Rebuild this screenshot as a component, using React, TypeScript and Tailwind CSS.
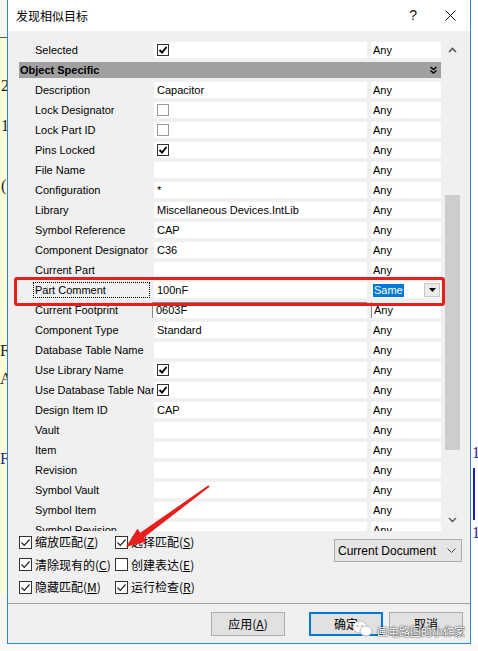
// "发现相似目标" dialog (Altium Find Similar Objects) over a schematic.

type Row = { label: string; value?: string; check?: boolean; header?: boolean };

const rows: Row[] = [
  { label: "Selected", check: true },
  { label: "Object Specific", header: true },
  { label: "Description", value: "Capacitor" },
  { label: "Lock Designator", check: false },
  { label: "Lock Part ID", check: false },
  { label: "Pins Locked", check: true },
  { label: "File Name", value: "" },
  { label: "Configuration", value: "*" },
  { label: "Library", value: "Miscellaneous Devices.IntLib" },
  { label: "Symbol Reference", value: "CAP" },
  { label: "Component Designator", value: "C36" },
  { label: "Current Part", value: "" },
  { label: "Part Comment", value: "100nF" },
  { label: "Current Footprint", value: "0603F" },
  { label: "Component Type", value: "Standard" },
  { label: "Database Table Name", value: "" },
  { label: "Use Library Name", check: true },
  { label: "Use Database Table Name", check: true },
  { label: "Design Item ID", value: "CAP" },
  { label: "Vault", value: "" },
  { label: "Item", value: "" },
  { label: "Revision", value: "" },
  { label: "Symbol Vault", value: "" },
  { label: "Symbol Item", value: "" },
  { label: "Symbol Revision", value: "" },
];

function GridCheck({ on }: { on: boolean }) {
  return (
    <span
      className={
        "flex h-[12px] w-[12px] items-center justify-center border bg-white " +
        (on ? "border-[#333]" : "border-[#9a9a9a]")
      }
    >
      {on && (
        <svg width="10" height="10" viewBox="0 0 10 10">
          <path d="M1.5 5 L4 7.5 L8.5 2" stroke="#000" strokeWidth="1.9" fill="none" />
        </svg>
      )}
    </span>
  );
}

function GridRow({ row }: { row: Row }) {
  if (row.header) {
    return (
      <div className="flex h-[20px] shrink-0 items-center">
        <div className="flex h-[16px] w-[422px] items-center justify-between bg-[#a0a0a0] pl-[1px] pr-[4px]">
          <span className="text-[11px] font-bold text-black">{row.label}</span>
          <svg width="7" height="8" viewBox="0 0 7 8">
            <path d="M0.5 1 L3.5 3.5 L6.5 1 M0.5 4.5 L3.5 7 L6.5 4.5" stroke="#000" strokeWidth="1.4" fill="none" />
          </svg>
        </div>
      </div>
    );
  }
  const focused = row.label === "Part Comment";
  const under = row.label === "Current Footprint";
  return (
    <div className="flex h-[20px] shrink-0 items-center">
      <div className="h-[16px] w-[135px] overflow-hidden whitespace-nowrap">
        {focused ? (
          <div className="ml-[14px] flex h-[16px] w-[117px] items-center border border-dotted border-black pl-[1px]">
            {row.label}
          </div>
        ) : (
          <div className="flex h-[16px] items-center pl-[16px]">{row.label}</div>
        )}
      </div>
      <div
        className={
          "flex h-[16px] w-[213px] items-center overflow-hidden whitespace-nowrap bg-white pl-[3px]" +
          (under ? " -ml-[2px] w-[215px] border-l border-t border-[#8a8a8a]" : "")
        }
      >
        {row.check !== undefined ? <GridCheck on={row.check} /> : row.value}
      </div>
      {focused ? (
        <div className="ml-[4px] flex h-[16px] w-[70px] items-center justify-between bg-white pl-[2px] pr-[1px]">
          <span className="bg-[#0078d7] px-[1px] leading-[13px] text-white">Same</span>
          <span className="flex h-[14px] w-[16px] items-center justify-center border border-[#c8c8c8] bg-[#ececec]">
            <svg width="7" height="4" viewBox="0 0 7 4">
              <path d="M0 0 H7 L3.5 4 Z" fill="#000" />
            </svg>
          </span>
        </div>
      ) : (
        <div
          className={
            "ml-[4px] flex h-[16px] w-[70px] items-center bg-white pl-[2px]" +
            (under ? " border-l border-[#8a8a8a]" : "")
          }
        >
          Any
        </div>
      )}
    </div>
  );
}

function Scrollbar() {
  return (
    <div className="flex h-full w-[18px] flex-col items-center bg-[#f0f0f0]">
      <div className="flex h-[20px] shrink-0 items-center">
        <svg width="9" height="6" viewBox="0 0 9 6">
          <path d="M1 5 L4.5 1.5 L8 5" stroke="#555" strokeWidth="1.6" fill="none" />
        </svg>
      </div>
      <div className="mt-[135px] h-[255px] w-[15px] shrink-0 bg-[#cdcdcd]" />
      <div className="flex-1" />
      <div className="flex h-[22px] shrink-0 items-center">
        <svg width="9" height="6" viewBox="0 0 9 6">
          <path d="M1 1 L4.5 4.5 L8 1" stroke="#555" strokeWidth="1.4" fill="none" />
        </svg>
      </div>
    </div>
  );
}

function BoxCheck({ on, label, key1 }: { on: boolean; label: string; key1: string }) {
  return (
    <div className="flex items-center gap-[3px]">
      <span className="flex h-[13px] w-[13px] items-center justify-center border border-[#333] bg-white">
        {on && (
          <svg width="11" height="11" viewBox="0 0 11 11">
            <path d="M1.5 5.5 L4.3 8.3 L9.5 2.5" stroke="#222" strokeWidth="1.2" fill="none" />
          </svg>
        )}
      </span>
      <span className="text-[12px] leading-none text-black">
        {label}(<span className="underline">{key1}</span>)
      </span>
    </div>
  );
}

function Button({ text, primary }: { text: React.ReactNode; primary?: boolean }) {
  return (
    <div
      className={
        "flex h-[24px] w-[74px] items-center justify-center bg-[#e1e1e1] text-[12px] text-black " +
        (primary ? "border-2 border-[#0078d7]" : "border border-[#adadad]")
      }
    >
      {text}
    </div>
  );
}

export default function App() {
  return (
    <div className="relative h-[651px] w-[478px] overflow-hidden bg-[#fafafa] font-['Liberation_Sans','Noto_Sans_CJK_SC',sans-serif] text-[11px] text-black">
      <div className="flex h-[644px]">
        {/* schematic peeking out on the left */}
        <div className="relative flex w-[7px] flex-col">
          <div className="h-[37px] bg-[#f7f7f7]" />
          <div className="h-px bg-[#555]" />
          <div className="relative flex-1 overflow-hidden bg-[#ffffd8] font-['Liberation_Serif',serif] text-[16px] leading-none text-[#222]">
            <span className="absolute left-[1px] top-[40px]">2</span>
            <span className="absolute left-[1px] top-[80px]">1</span>
            <span className="absolute left-[1px] top-[140px]">(</span>
            <span className="absolute left-[0px] top-[305px]">F</span>
            <span className="absolute left-[0px] top-[333px]">A</span>
            <span className="absolute left-[0px] top-[413px] text-[#23239a]">F</span>
          </div>
          <div className="h-[50px] bg-[#f7f7f7]" />
        </div>

        {/* dialog */}
        <div className="flex w-[464px] flex-col border-x border-b border-[#2f86d6]">
          <div className="flex h-[31px] shrink-0 items-center bg-white pl-[8px]">
            <span className="font-['Noto_Sans_CJK_SC',sans-serif] text-[12px]">发现相似目标</span>
            <span className="ml-auto mr-[28px] text-[14px] text-[#111]">?</span>
            <svg className="mr-[14px]" width="11" height="11" viewBox="0 0 11 11">
              <path d="M0.5 0.5 L10.5 10.5 M10.5 0.5 L0.5 10.5" stroke="#111" strokeWidth="1" />
            </svg>
          </div>

          <div className="flex flex-1 flex-col bg-[#f0f0f0]">
            <div className="mt-[9px] flex h-[491px] shrink-0 gap-[2px] pl-[11px]">
              <div className="flex w-[422px] flex-col overflow-hidden">
                {rows.map((r) => (
                  <GridRow key={r.label} row={r} />
                ))}
              </div>
              <Scrollbar />
            </div>

            <div className="flex h-[72px] shrink-0 pl-[11px] pr-[8px] font-['Noto_Sans_CJK_SC',sans-serif]">
              <div className="grid grid-cols-[96px_auto] grid-rows-[22px_23px_22px] items-center">
                <BoxCheck on label="缩放匹配" key1="Z" />
                <BoxCheck on label="选择匹配" key1="S" />
                <BoxCheck on label="清除现有的" key1="C" />
                <BoxCheck on={false} label="创建表达" key1="E" />
                <BoxCheck on label="隐藏匹配" key1="M" />
                <BoxCheck on label="运行检查" key1="R" />
              </div>
              <div className="ml-auto mt-[8px] flex h-[23px] w-[128px] items-center justify-between border border-[#acacac] bg-[#e5e5e5] pl-[3px] pr-[5px] font-['Liberation_Sans',sans-serif] text-[12px]">
                <span>Current Document</span>
                <svg width="9" height="5" viewBox="0 0 9 5">
                  <path d="M0.5 0.5 L4.5 4.5 L8.5 0.5" stroke="#444" strokeWidth="1" fill="none" />
                </svg>
              </div>
            </div>

            <div className="h-px shrink-0 bg-[#a0a0a0]" />

            <div className="flex h-[39px] shrink-0 items-start justify-end pr-[7px] pt-[8px] font-['Noto_Sans_CJK_SC',sans-serif]">
              <Button text={<span>应用(<span className="underline">A</span>)</span>} />
              <div className="w-[24px]" />
              <Button text="确定" primary />
              <div className="w-[6px]" />
              <Button text="取消" />
            </div>
          </div>
        </div>

        {/* schematic on the right */}
        <div className="relative flex-1 overflow-hidden bg-white font-['Liberation_Serif',serif] text-[16px] leading-none text-[#23239a]">
          <span className="absolute left-[1px] top-[445px]">1</span>
          <div className="absolute left-[2px] top-[468px] h-[52px] w-[2px] bg-[#1d1dc0]" />
          <span className="absolute left-[1px] top-[525px]">1</span>
        </div>
      </div>

      {/* red highlight around the Part Comment row */}
      <div className="pointer-events-none absolute left-[14px] top-[277px] h-[29px] w-[431px] rounded-[3px] border-[3px] border-[#e5201c]" />

      {/* red arrow annotation */}
      <svg className="pointer-events-none absolute left-0 top-0" width="478" height="651" viewBox="0 0 478 651">
        <polygon
          points="126,547 146.8,541.6 143.9,537.6 209.6,486.8 208.4,485.2 140.3,532.8 137.4,528.8"
          fill="#e5201c"
        />
      </svg>

      {/* watermark */}
      <div className="pointer-events-none absolute left-[352px] top-[619px] flex items-center gap-[3px]">
        <svg width="22" height="20" viewBox="0 0 22 20">
          <ellipse cx="8" cy="8" rx="7" ry="6" fill="#fff" stroke="#bbb" strokeWidth="1" />
          <ellipse cx="14" cy="12" rx="6" ry="5" fill="#fff" stroke="#bbb" strokeWidth="1" />
          <circle cx="5.5" cy="7" r="0.9" fill="#aaa" />
          <circle cx="10" cy="7" r="0.9" fill="#aaa" />
        </svg>
        <span className="mt-[4px] font-['Noto_Sans_CJK_SC',sans-serif] text-[11px] text-white [text-shadow:0_0_2px_#333,0_0_1px_#333]">
          画电路图的小作家
        </span>
      </div>
    </div>
  );
}
